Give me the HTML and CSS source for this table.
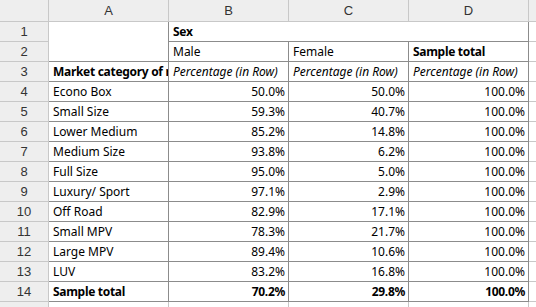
FILE: index.html
```html
<!DOCTYPE html>
<html>
<head>
<meta charset="utf-8">
<link rel="stylesheet" href="styles.css">
</head>
<body>
<div class="sheet">
  <div class="c hd corner"></div>
  <div class="c hd col">A</div>
  <div class="c hd col">B</div>
  <div class="c hd col">C</div>
  <div class="c hd col">D</div>
  <div class="c hd col last"></div>

  <div class="c hd row">1</div>
  <div class="c t a12"></div>
  <div class="c t txt b sex">Sex</div>
  <div class="c last"></div>

  <div class="c hd row">2</div>
  <div class="c t txt">Male</div>
  <div class="c t txt">Female</div>
  <div class="c t txt b">Sample total</div>
  <div class="c last"></div>

  <div class="c hd row">3</div>
  <div class="c t txt b"><span class="clip">Market category of respondent</span></div>
  <div class="c t txt i">Percentage (in Row)</div>
  <div class="c t txt i">Percentage (in Row)</div>
  <div class="c t txt i">Percentage (in Row)</div>
  <div class="c last"></div>

  <div class="c hd row">4</div>
  <div class="c t txt">Econo Box</div>
  <div class="c t num">50.0%</div>
  <div class="c t num">50.0%</div>
  <div class="c t num">100.0%</div>
  <div class="c last"></div>

  <div class="c hd row">5</div>
  <div class="c t txt">Small Size</div>
  <div class="c t num">59.3%</div>
  <div class="c t num">40.7%</div>
  <div class="c t num">100.0%</div>
  <div class="c last"></div>

  <div class="c hd row">6</div>
  <div class="c t txt">Lower Medium</div>
  <div class="c t num">85.2%</div>
  <div class="c t num">14.8%</div>
  <div class="c t num">100.0%</div>
  <div class="c last"></div>

  <div class="c hd row">7</div>
  <div class="c t txt">Medium Size</div>
  <div class="c t num">93.8%</div>
  <div class="c t num">6.2%</div>
  <div class="c t num">100.0%</div>
  <div class="c last"></div>

  <div class="c hd row">8</div>
  <div class="c t txt">Full Size</div>
  <div class="c t num">95.0%</div>
  <div class="c t num">5.0%</div>
  <div class="c t num">100.0%</div>
  <div class="c last"></div>

  <div class="c hd row">9</div>
  <div class="c t txt">Luxury/ Sport</div>
  <div class="c t num">97.1%</div>
  <div class="c t num">2.9%</div>
  <div class="c t num">100.0%</div>
  <div class="c last"></div>

  <div class="c hd row">10</div>
  <div class="c t txt">Off Road</div>
  <div class="c t num">82.9%</div>
  <div class="c t num">17.1%</div>
  <div class="c t num">100.0%</div>
  <div class="c last"></div>

  <div class="c hd row">11</div>
  <div class="c t txt">Small MPV</div>
  <div class="c t num">78.3%</div>
  <div class="c t num">21.7%</div>
  <div class="c t num">100.0%</div>
  <div class="c last"></div>

  <div class="c hd row">12</div>
  <div class="c t txt">Large MPV</div>
  <div class="c t num">89.4%</div>
  <div class="c t num">10.6%</div>
  <div class="c t num">100.0%</div>
  <div class="c last"></div>

  <div class="c hd row">13</div>
  <div class="c t txt">LUV</div>
  <div class="c t num">83.2%</div>
  <div class="c t num">16.8%</div>
  <div class="c t num">100.0%</div>
  <div class="c last"></div>

  <div class="c hd row">14</div>
  <div class="c t txt b">Sample total</div>
  <div class="c t num b">70.2%</div>
  <div class="c t num b">29.8%</div>
  <div class="c t num b">100.0%</div>
  <div class="c last"></div>

  <div class="c hd row">15</div>
  <div class="c"></div>
  <div class="c"></div>
  <div class="c"></div>
  <div class="c"></div>
  <div class="c last"></div>
</div>
</body>
</html>
```
FILE: styles.css
```css
html, body {
  margin: 0;
  padding: 0;
  background: #ffffff;
  overflow: hidden;
}

.sheet {
  display: grid;
  grid-template-columns: 49px 120px 120px 120px 120px 1fr;
  grid-template-rows: 22px repeat(15, 20px);
  width: 536px;
  font-family: "Noto Sans", "Open Sans", sans-serif;
  font-size: 12px;
  color: #000;
}

.c {
  box-sizing: border-box;
  border-right: 1px solid #c8c8c8;
  border-bottom: 1px solid #c8c8c8;
  overflow: hidden;
  white-space: nowrap;
  display: flex;
  align-items: center;
  min-width: 0;
}

.last {
  border-right: none;
}

.hd {
  background: #eeeeee;
  font-family: "Liberation Sans", Arial, sans-serif;
  font-size: 13px;
  color: #333333;
  justify-content: center;
}

.t {
  border-right-color: #8c8c8c;
  border-bottom-color: #8c8c8c;
}

.a12 {
  grid-row: span 2;
}

.sex {
  grid-column: span 3;
}

.txt {
  padding-left: 4px;
}

.clip {
  overflow: hidden;
  min-width: 0;
}

.num {
  justify-content: flex-end;
  padding-right: 3px;
}

.b {
  font-weight: bold;
  letter-spacing: -0.3px;
}

.i {
  font-style: italic;
}
```
